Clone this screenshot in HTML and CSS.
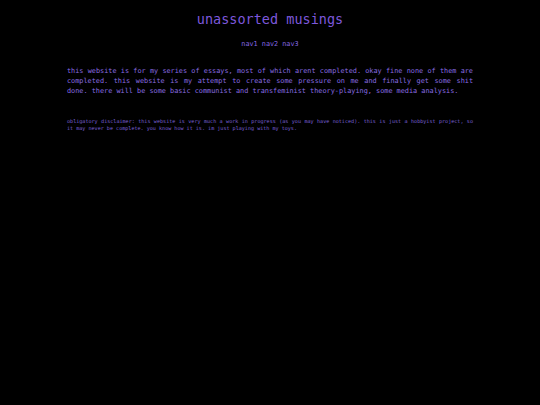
FILE: index.html
```html
<!DOCTYPE html>
<html>
<head>
<meta charset="utf-8">
<link rel="stylesheet" href="styles.css">
</head>
<body>
<div class="page">
  <h1 class="title">unassorted musings</h1>
  <nav class="nav"><a href="#">nav1</a> <a href="#">nav2</a> <a href="#">nav3</a></nav>
  <p class="intro">this website is for my series of essays, most of which arent completed. okay fine none of them are completed. this website is my attempt to create some pressure on me and finally get some shit done. there will be some basic communist and transfeminist theory-playing, some media analysis.</p>
  <p class="disclaimer">obligatory disclaimer: this website is very much a work in progress (as you may have noticed). this is just a hobbyist project, so it may never be complete. you know how it is. im just playing with my toys.</p>
</div>
</body>
</html>
```
FILE: styles.css
```css
html, body {
  margin: 0;
  padding: 0;
  background: #000;
  height: 100%;
}
body {
  font-family: "DejaVu Sans Mono", "Liberation Mono", monospace;
  color: #8466e0;
}
.page {
  width: 406px;
  margin: 0 auto;
  padding-top: 10px;
}
.title {
  margin: 0;
  text-align: center;
  font-size: 13.5px;
  font-weight: normal;
  line-height: 18px;
  color: #7d58dc;
}
.nav {
  margin-top: 11px;
  text-align: center;
  font-size: 6.8px;
  line-height: 10px;
}
.nav a {
  color: #8466e0;
  text-decoration: none;
}
.intro {
  margin: 17px 0 0;
  font-size: 6.85px;
  line-height: 10px;
  text-align: justify;
  color: #8a6ce2;
}
.disclaimer {
  margin: 22px 0 0;
  font-size: 5.1px;
  line-height: 7px;
  text-align: justify;
  color: #7c60d8;
}
```
